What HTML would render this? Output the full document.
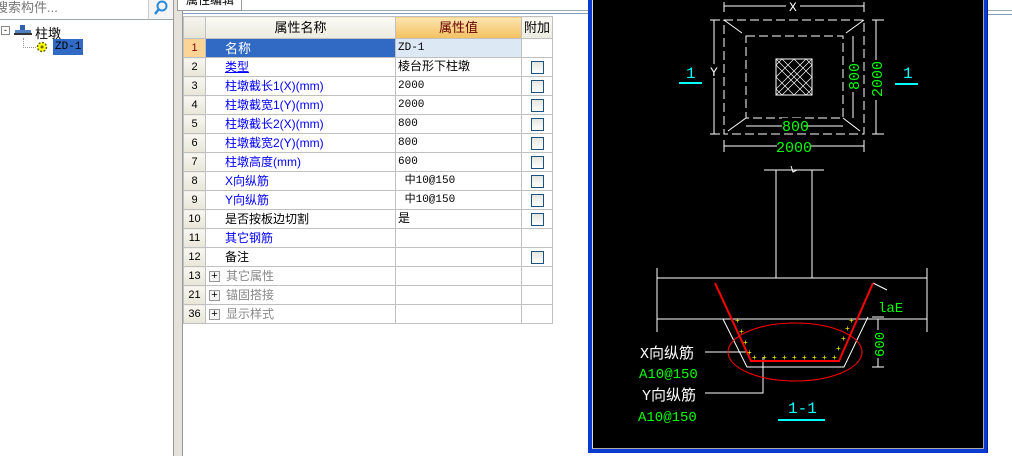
<!DOCTYPE html>
<html><head><meta charset="utf-8"><style>
*{margin:0;padding:0;box-sizing:border-box}
body{width:1012px;height:456px;overflow:hidden;background:#fff;position:relative;font-family:"Liberation Sans","Noto Sans CJK SC",sans-serif;font-size:12px}
.abs{position:absolute}
table{border-collapse:collapse;position:absolute;left:183px;top:16px;table-layout:fixed}
td{border:1px solid #c0c0c0;height:19px;padding:0;white-space:nowrap;overflow:hidden;font-size:12px;line-height:17px}
td.n{background:linear-gradient(#f8f7f0,#e8e6d8);text-align:center;font-size:11px;width:22px}
td.k{padding-left:19px;color:#00f}
td.v{padding-left:2px;font-family:"Liberation Mono","Noto Sans CJK SC",monospace;font-size:11px}
td.c{text-align:center}
.cb{display:inline-block;width:13px;height:13px;border:1px solid #1c5180;background:linear-gradient(#e6e6e0,#fff);vertical-align:middle}
.pl{display:inline-block;width:11px;height:11px;border:1px solid #999;font-size:11px;line-height:9px;text-align:center;margin:0 6px 0 3px;vertical-align:middle;color:#000;background:#f4f4f4}
.g{color:#888}
</style></head><body>
<div class="abs" style="left:0;top:0;width:148px;height:20px;border-bottom:1px solid #9aa;overflow:hidden"><div style="margin-left:-5px;margin-top:-3px;color:#777;font-size:13px">搜索构件...</div></div>
<div class="abs" style="left:148px;top:0;width:25px;height:20px;border-left:1px solid #ccc;border-bottom:1px solid #9aa;background:#f4f4f4"></div>
<svg class="abs" style="left:152px;top:0" width="18" height="18"><circle cx="10" cy="6" r="4.5" fill="none" stroke="#2a8ad8" stroke-width="2"/><line x1="7" y1="9" x2="3" y2="14" stroke="#2a8ad8" stroke-width="2.5"/></svg>
<div class="abs" style="left:173px;top:0;width:10px;height:456px;background:#e4e2da;border-left:1px solid #999;border-right:1px solid #999"></div>
<div class="abs" style="left:1px;top:26px;width:9px;height:9px;border:1px solid #888;font-size:9px;line-height:6px;text-align:center">-</div>
<svg class="abs" style="left:14px;top:24px" width="18" height="12"><rect x="6" y="1" width="5" height="5" fill="#3060b0"/><rect x="1" y="6" width="16" height="3" fill="#5080c0"/><rect x="0" y="9" width="18" height="2" fill="#333"/></svg>
<div class="abs" style="left:35px;top:23px;font-size:13px">柱墩</div>
<div class="abs" style="left:23px;top:38px;width:13px;height:10px;border-left:1px dotted #999;border-bottom:1px dotted #999"></div>
<svg class="abs" style="left:36px;top:41px" width="12" height="12"><circle cx="6" cy="6" r="4.5" fill="#ff0" stroke="#660" stroke-width="1.5" stroke-dasharray="2 1.5"/><circle cx="6" cy="6" r="1.5" fill="#660"/></svg>
<div class="abs" style="left:53px;top:39px;width:30px;height:16px;background:#316ac5;color:#000;font-family:'Liberation Mono',monospace;font-size:11px;line-height:16px;padding-left:2px">ZD-1</div>
<div class="abs" style="left:183px;top:10px;width:405px;height:1px;background:#9aa"></div>
<div class="abs" style="left:183px;top:13px;width:405px;height:1px;background:#7f9db9"></div>
<div class="abs" style="left:177px;top:-4px;width:65px;height:15px;border:1px solid #999;border-top:none;background:#fff;font-size:12px;line-height:9px;padding-left:8px">属性编辑</div>
<div class="abs" style="left:988px;top:10px;width:24px;height:1px;background:#9aa"></div>
<div class="abs" style="left:988px;top:14px;width:24px;height:1px;background:#7f9db9"></div>
<table>
<tr style="height:22px"><td class="n" style="height:22px;background:linear-gradient(#f6f5ee,#e6e4d6)"></td><td style="width:190px;text-align:center;background:linear-gradient(#fbfaf4,#ecebe0);font-size:13px">属性名称</td><td style="width:126px;text-align:center;background:linear-gradient(#fde5b0,#f3c060);color:#600;font-size:13px">属性值</td><td style="width:31px;text-align:center;background:linear-gradient(#fbfaf4,#ecebe0);font-size:13px">附加</td></tr>
<tr><td class="n" style="background:#fcd596;color:#800">1</td><td class="k" style="background:#316ac5;color:#fff;font-size:13px">名称</td><td class="v" style="background:#dde8f5">ZD-1</td><td></td></tr>
<tr><td class="n">2</td><td class="k"><u>类型</u></td><td class="v" style="font-size:12px">棱台形下柱墩</td><td class="c"><span class="cb"></span></td></tr>
<tr><td class="n">3</td><td class="k">柱墩截长1(X)(mm)</td><td class="v">2000</td><td class="c"><span class="cb"></span></td></tr>
<tr><td class="n">4</td><td class="k">柱墩截宽1(Y)(mm)</td><td class="v">2000</td><td class="c"><span class="cb"></span></td></tr>
<tr><td class="n">5</td><td class="k">柱墩截长2(X)(mm)</td><td class="v">800</td><td class="c"><span class="cb"></span></td></tr>
<tr><td class="n">6</td><td class="k">柱墩截宽2(Y)(mm)</td><td class="v">800</td><td class="c"><span class="cb"></span></td></tr>
<tr><td class="n">7</td><td class="k">柱墩高度(mm)</td><td class="v">600</td><td class="c"><span class="cb"></span></td></tr>
<tr><td class="n">8</td><td class="k">X向纵筋</td><td class="v">&nbsp;中10@150</td><td class="c"><span class="cb"></span></td></tr>
<tr><td class="n">9</td><td class="k">Y向纵筋</td><td class="v">&nbsp;中10@150</td><td class="c"><span class="cb"></span></td></tr>
<tr><td class="n">10</td><td class="k" style="color:#000">是否按板边切割</td><td class="v" style="font-size:12px">是</td><td class="c"><span class="cb"></span></td></tr>
<tr><td class="n">11</td><td class="k">其它钢筋</td><td></td><td></td></tr>
<tr><td class="n">12</td><td class="k" style="color:#000">备注</td><td></td><td class="c"><span class="cb"></span></td></tr>
<tr><td class="n">13</td><td class="g"><span class="pl">+</span>其它属性</td><td></td><td></td></tr>
<tr><td class="n">21</td><td class="g"><span class="pl">+</span>锚固搭接</td><td></td><td></td></tr>
<tr><td class="n">36</td><td class="g"><span class="pl">+</span>显示样式</td><td></td><td></td></tr>
</table>
<div class="abs" style="left:588px;top:0;width:400px;height:453px;background:#0a3ad0;border-right:1px solid #0020a0"></div>
<div class="abs" style="left:592px;top:0;width:392px;height:449px;background:#000;border-left:1px solid #ddd;border-right:1px solid #aaa;border-bottom:1px solid #aaa"></div>
<svg class="abs" style="left:0;top:0" width="1012" height="456" font-family="Liberation Mono,Noto Sans CJK SC,monospace">
<g stroke="#fff" stroke-width="1" fill="none">
<rect x="724" y="20" width="140" height="114" stroke-dasharray="9 4"/>
<rect x="746" y="36" width="97" height="82" stroke-dasharray="9 4"/>
<line x1="724" y1="20" x2="742" y2="33"/><line x1="864" y1="20" x2="846" y2="33"/>
<line x1="728" y1="131" x2="746" y2="118"/><line x1="860" y1="131" x2="843" y2="118"/>
<rect x="776" y="59" width="36" height="36"/>
<line x1="724" y1="6" x2="864" y2="6"/><line x1="724" y1="2" x2="724" y2="12"/><line x1="864" y1="2" x2="864" y2="12"/>
<line x1="714" y1="20" x2="714" y2="134"/><line x1="710" y1="20" x2="720" y2="20"/><line x1="710" y1="134" x2="720" y2="134"/>
<line x1="746" y1="126" x2="843" y2="126"/>
<line x1="724" y1="146" x2="864" y2="146"/><line x1="724" y1="140" x2="724" y2="152"/><line x1="864" y1="140" x2="864" y2="152"/>
<line x1="853" y1="36" x2="853" y2="118"/>
<line x1="876" y1="20" x2="876" y2="134"/><line x1="872" y1="20" x2="884" y2="20"/><line x1="872" y1="134" x2="884" y2="134"/>
<line x1="764" y1="170" x2="824" y2="170"/><line x1="776" y1="170" x2="776" y2="278"/><line x1="812" y1="170" x2="812" y2="278"/>
<polyline points="791,166 793,172 797,170"/>
<line x1="657" y1="278" x2="927" y2="278"/><line x1="657" y1="319" x2="927" y2="319"/>
<line x1="657" y1="268" x2="657" y2="332"/><line x1="927" y1="268" x2="927" y2="332"/>
<polyline points="723,319 747,367 844,367 868,317"/>
<line x1="705" y1="352" x2="748" y2="352"/>
<polyline points="705,393 763,393 763,357"/>
<line x1="878" y1="319" x2="878" y2="367"/><line x1="872" y1="367" x2="884" y2="367"/><line x1="872" y1="317" x2="884" y2="317"/>
<line x1="873" y1="283" x2="887" y2="290"/>
</g>
<g stroke="#fff" stroke-width="0.7">
<path d="M776 65 l6 -6 M776 77 l18 -18 M776 89 l30 -30 M782 95 l30 -30 M794 95 l18 -18 M806 95 l6 -6 M776 65 l30 30 M776 77 l18 18 M776 89 l6 6 M782 59 l30 30 M794 59 l18 18 M806 59 l6 6 M776 59 l36 36 M812 59 l-36 36"/>
</g>
<rect x="786" y="1" width="14" height="11" fill="#000"/>
<rect x="709" y="64" width="10" height="14" fill="#000"/>
<g fill="#fff" font-size="13"><text x="789" y="11">X</text><text x="710" y="76">Y</text></g>
<g fill="#0f0" font-size="15">
<rect x="782" y="118" width="22" height="14" fill="#000"/><text x="782" y="131">800</text>
<rect x="777" y="138" width="34" height="16" fill="#000"/><text x="776" y="152">2000</text>
<rect x="845" y="62" width="16" height="30" fill="#000"/><text transform="translate(859,90) rotate(-90)">800</text>
<rect x="868" y="60" width="16" height="40" fill="#000"/><text transform="translate(882,97) rotate(-90)">2000</text>
<text x="878" y="312" font-size="14">laE</text>
<rect x="870" y="330" width="16" height="28" fill="#000"/><text transform="translate(884,357) rotate(-90)" font-size="14">600</text>
<text x="639" y="378" font-size="14">A10@150</text>
<text x="638" y="421" font-size="14">A10@150</text>
</g>
<g fill="#fff" font-size="15"><text x="640" y="358">X向纵筋</text><text x="642" y="400">Y向纵筋</text></g>
<g fill="#0ff" font-size="16"><text x="686" y="78">1</text><text x="903" y="78">1</text><text x="788" y="413">1-1</text></g>
<g stroke="#0ff" stroke-width="2"><line x1="679" y1="83" x2="702" y2="83"/><line x1="895" y1="84" x2="918" y2="84"/><line x1="778" y1="420" x2="825" y2="420"/></g>
<ellipse cx="795" cy="352" rx="67" ry="29" fill="none" stroke="#f00" stroke-width="1"/>
<polyline points="715,283 751,361 839,361 873,283" fill="none" stroke="#f00" stroke-width="2"/>
<g fill="#ff0" font-size="8"><text x="735" y="323">+</text><text x="739" y="334">+</text><text x="743" y="345">+</text><text x="747" y="355">+</text><text x="752" y="360">+</text><text x="762" y="360">+</text><text x="772" y="360">+</text><text x="782" y="360">+</text><text x="792" y="360">+</text><text x="802" y="360">+</text><text x="812" y="360">+</text><text x="822" y="360">+</text><text x="832" y="360">+</text><text x="836" y="351">+</text><text x="841" y="341">+</text><text x="845" y="331">+</text><text x="849" y="323">+</text></g>
</svg>
</body></html>
